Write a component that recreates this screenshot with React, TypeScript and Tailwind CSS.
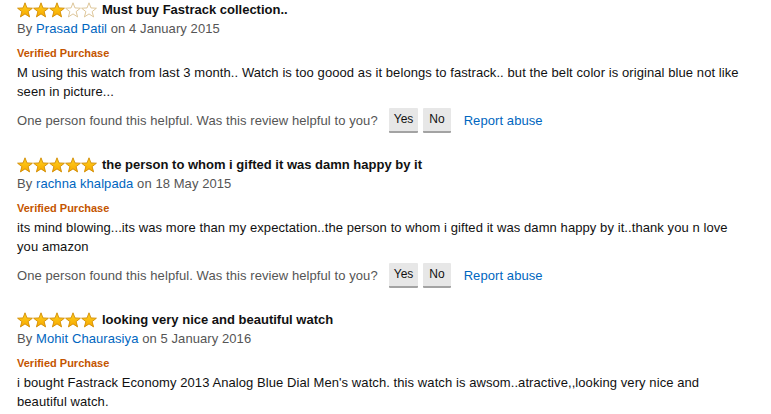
const reviews = [
  {
    rating: 3,
    title: 'Must buy Fastrack collection..',
    author: 'Prasad Patil',
    date: '4 January 2015',
    body: 'M using this watch from last 3 month.. Watch is too goood as it belongs to fastrack.. but the belt color is original blue not like seen in picture...',
    helpful: true,
  },
  {
    rating: 5,
    title: 'the person to whom i gifted it was damn happy by it',
    author: 'rachna khalpada',
    date: '18 May 2015',
    body: 'its mind blowing...its was more than my expectation..the person to whom i gifted it was damn happy by it..thank you n love you amazon',
    helpful: true,
  },
  {
    rating: 5,
    title: 'looking very nice and beautiful watch',
    author: 'Mohit Chaurasiya',
    date: '5 January 2016',
    body: "i bought Fastrack Economy 2013 Analog Blue Dial Men's watch. this watch is awsom..atractive,,looking very nice and beautiful watch.",
    helpful: false,
  },
]

const starPoints =
  '8,0.8 9.94,5.93 15.42,6.19 11.14,9.62 12.58,14.91 8,11.9 3.42,14.91 4.86,9.62 0.58,6.19 6.06,5.93'

function Star({ filled }: { filled: boolean }) {
  return (
    <svg width="16" height="16" viewBox="0 0 16 16" className="block">
      <defs>
        <linearGradient id="starGold" x1="0" y1="0" x2="0" y2="1">
          <stop offset="0" stopColor="#ffd21f" />
          <stop offset="1" stopColor="#f7a800" />
        </linearGradient>
      </defs>
      <polygon
        points={starPoints}
        fill={filled ? 'url(#starGold)' : '#ffffff'}
        stroke={filled ? '#d18b00' : '#d9bf8f'}
        strokeWidth="0.9"
        strokeLinejoin="round"
      />
    </svg>
  )
}

export default function App() {
  return (
    <div className="w-[771px] h-[414px] overflow-hidden bg-white pl-[17px] font-['Liberation_Sans',Arial,sans-serif] text-[13px] leading-[19px] tracking-[0.08px] text-[#111]">
      {reviews.map((r, i) => (
        <div key={i} className="w-[733px] mb-[22px]">
          <div className="flex items-center h-[19px]">
            <div className="flex">
              {[0, 1, 2, 3, 4].map((s) => (
                <Star key={s} filled={s < r.rating} />
              ))}
            </div>
            <span className="ml-[5px] font-bold tracking-normal text-[#111]">{r.title}</span>
          </div>
          <div className="text-[#555]">
            By <a className="text-[#0066c0]">{r.author}</a> on {r.date}
          </div>
          <div className="mt-[8px] text-[11px] leading-[15px] font-bold tracking-normal text-[#c45500]">
            Verified Purchase
          </div>
          <p className="mt-[2px] text-[#111]">{r.body}</p>
          {r.helpful && (
            <div className="mt-[7px] flex items-center h-[25px]">
              <span className="text-[#555]">
                One person found this helpful. Was this review helpful to you?
              </span>
              <button className="ml-[11px] h-[25px] px-[5px] bg-[#e7e7e7] border-b-2 border-[#a3a3a3] text-[12px] tracking-normal text-[#111] rounded-[1px]">
                Yes
              </button>
              <button className="ml-[5px] h-[25px] px-[6px] bg-[#e7e7e7] border-b-2 border-[#a3a3a3] text-[12px] tracking-normal text-[#111] rounded-[1px]">
                No
              </button>
              <a className="ml-[13px] text-[#0066c0]">Report abuse</a>
            </div>
          )}
        </div>
      ))}
    </div>
  )
}
